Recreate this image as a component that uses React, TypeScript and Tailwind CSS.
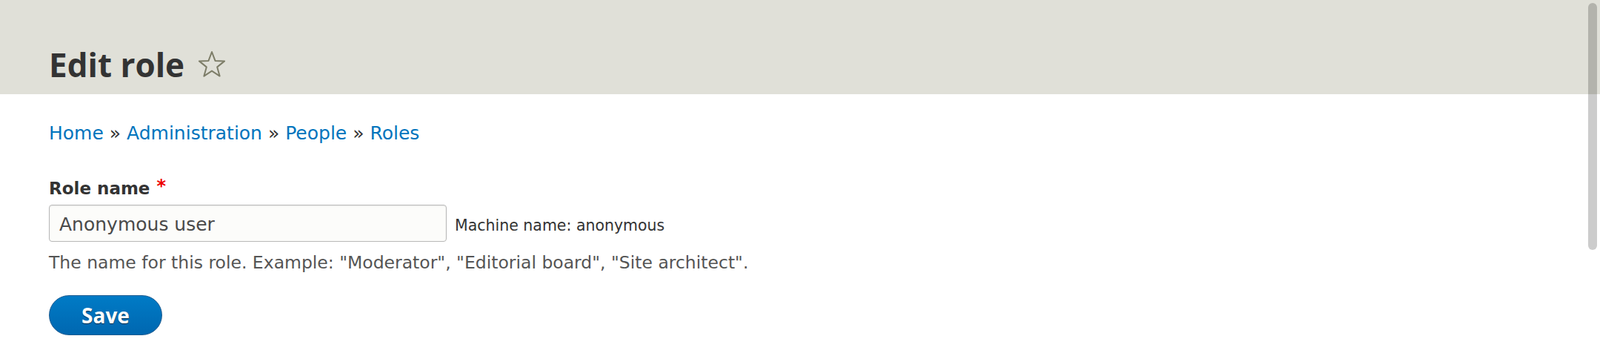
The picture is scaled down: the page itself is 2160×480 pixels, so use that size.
export default function App() {
  return (
    <div className="relative min-h-[480px] w-full bg-white font-['DejaVu_Sans',sans-serif] text-[#333]">
      {/* Page header */}
      <div className="h-[127px] bg-[#e0e0d8] pl-[66px] pt-[57px]">
        <h1 className="flex items-center font-['Open_Sans',sans-serif] text-[44px] font-bold leading-[60px] text-[#333]">
          Edit role
          <button className="ml-[17px] flex h-[40px] w-[40px] items-center justify-center" aria-label="Add to shortcuts">
            <svg viewBox="0 0 38 38" className="h-[38px] w-[38px]" fill="none" stroke="#7d7d68" strokeWidth="2" strokeLinejoin="round">
              <polygon points="19,2 23.5,13.9 36.1,14.4 26.2,22.4 29.6,34.6 19,27.6 8.4,34.6 11.8,22.4 1.9,14.4 14.5,13.9" />
            </svg>
          </button>
        </h1>
      </div>

      <div className="pl-[66px]">
        {/* Breadcrumb */}
        <nav className="mt-[36px] text-[25px] leading-[34px] text-[#333]">
          <a href="#" className="text-[#0074bd]">Home</a> » <a href="#" className="text-[#0074bd]">Administration</a> »{" "}
          <a href="#" className="text-[#0074bd]">People</a> » <a href="#" className="text-[#0074bd]">Roles</a>
        </nav>

        <form className="mt-[42px]">
          <label className="block text-[23px] font-bold leading-[30px] text-[#333]">
            Role name
            <span className="ml-[9px] align-top text-[24px] font-bold leading-[24px] text-[#e00]">*</span>
          </label>
          <div className="mt-[7px] flex items-baseline">
            <input
              defaultValue="Anonymous user"
              className="h-[50px] w-[537px] rounded-[4px] border border-[#b8b8b8] bg-[#fcfcfa] px-[13px] pb-0 pt-[3px] text-[25px] text-[#4a4a4a] shadow-[inset_0_1px_2px_rgba(0,0,0,0.08)] outline-none"
            />
            <span className="ml-[11px] text-[20.5px] text-[#333]">Machine name: anonymous</span>
          </div>
          <p className="mt-[13px] text-[23.5px] leading-[30px] text-[#555]">
            The name for this role. Example: "Moderator", "Editorial board", "Site architect".
          </p>
          <button
            type="button"
            className="mt-[29px] h-[54px] w-[153px] rounded-full border border-[#1e5c90] bg-gradient-to-b from-[#007bc6] to-[#0067b0] font-['Open_Sans',sans-serif] text-[28px] font-bold text-white [text-shadow:0_1px_1px_rgba(0,0,0,0.6)]"
          >
            Save
          </button>
        </form>
      </div>

      {/* overlay scrollbar */}
      <div className="absolute right-[4px] top-[4px] h-[333px] w-[12px] rounded-full bg-black/20" />
    </div>
  )
}
